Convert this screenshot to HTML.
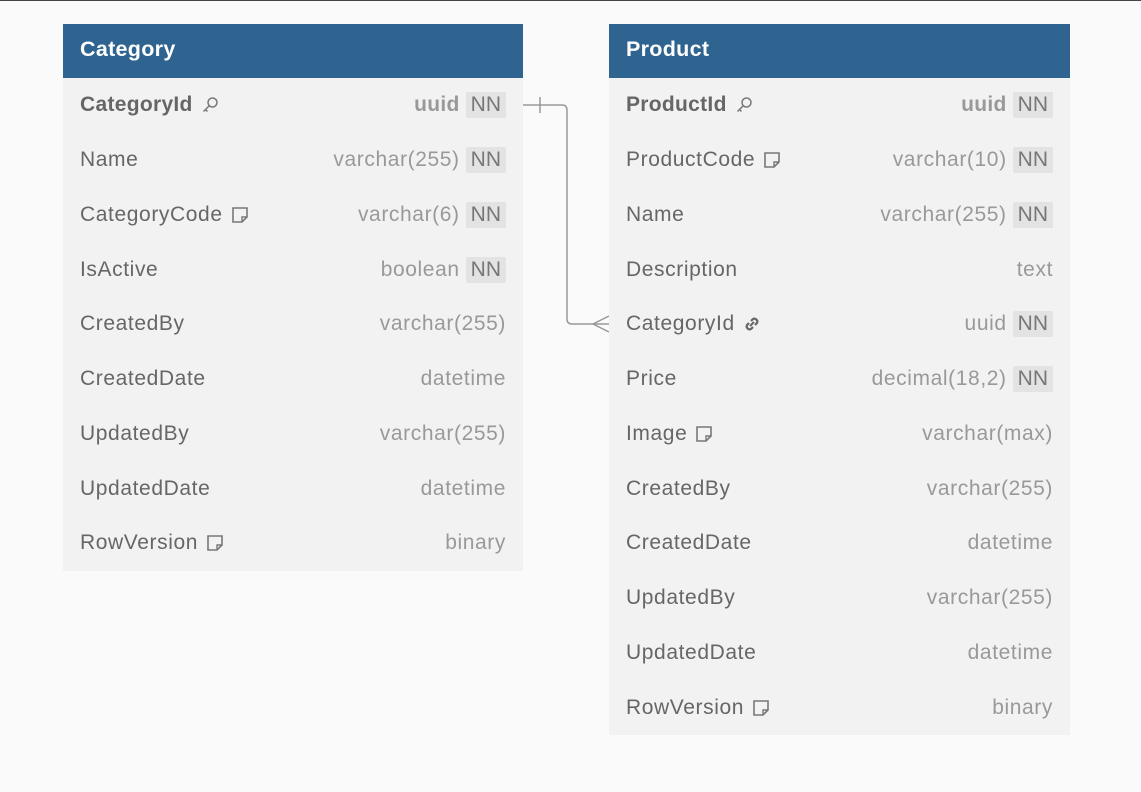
<!DOCTYPE html>
<html><head><style>
body{margin:0;width:1141px;height:791px;background:#fafafa;font-family:"Liberation Sans",sans-serif;position:relative;overflow:hidden;border-top:1px solid #444;box-sizing:border-box}
.t{position:absolute;background:#f2f2f2}
.h{height:54px;background:#2f6491;color:#fff;font-weight:bold;font-size:21.5px;line-height:50px;padding-left:17px;letter-spacing:0.3px}
.r{height:54.75px;display:flex;align-items:center;padding:0 17px;font-size:21px;letter-spacing:0.6px;color:#666;position:relative}
.r .n{flex:1;display:flex;align-items:center;gap:7px}
.r .ty{color:#999}
.nn{background:#e3e3e3;color:#777;padding:0 5px;margin-left:6px;line-height:26px;border-radius:2px;font-weight:normal;letter-spacing:0}
.b{font-weight:bold;letter-spacing:0.3px}
svg.i{width:20px;height:20px;flex-shrink:0}
</style></head><body>
<svg width="1141" height="791" style="position:absolute;left:0;top:0">
<path d="M523 104 H562 Q567 104 567 109 V318 Q567 323 572 323 H609" fill="none" stroke="#999" stroke-width="1.5"/>
<path d="M540 96 V112" stroke="#999" stroke-width="1.5"/>
<path d="M609 315 L593 323 L609 331" fill="none" stroke="#999" stroke-width="1.5"/>
</svg>
<div class="t" style="left:63px;top:23px;width:460px">
<div class="h">Category</div>
<div class="r b"><span class="n">CategoryId <svg class="i" viewBox="0 0 20 20"><circle cx="12.5" cy="7.5" r="4.5" fill="none" stroke="#777" stroke-width="1.5"/><path d="M9.5 10.5 L3.5 16.5 M5.5 14.5 L7.5 16.5" stroke="#777" stroke-width="1.5" fill="none"/></svg></span><span class="ty">uuid</span><span class="nn">NN</span></div>
<div class="r"><span class="n">Name</span><span class="ty">varchar(255)</span><span class="nn">NN</span></div>
<div class="r"><span class="n">CategoryCode <svg class="i" viewBox="0 0 20 20"><path d="M3 3H17V12L12 17H3Z" fill="none" stroke="#777" stroke-width="1.6"/><path d="M12 17V12H17" fill="none" stroke="#777" stroke-width="1.4"/></svg></span><span class="ty">varchar(6)</span><span class="nn">NN</span></div>
<div class="r"><span class="n">IsActive</span><span class="ty">boolean</span><span class="nn">NN</span></div>
<div class="r"><span class="n">CreatedBy</span><span class="ty">varchar(255)</span></div>
<div class="r"><span class="n">CreatedDate</span><span class="ty">datetime</span></div>
<div class="r"><span class="n">UpdatedBy</span><span class="ty">varchar(255)</span></div>
<div class="r"><span class="n">UpdatedDate</span><span class="ty">datetime</span></div>
<div class="r"><span class="n">RowVersion <svg class="i" viewBox="0 0 20 20"><path d="M3 3H17V12L12 17H3Z" fill="none" stroke="#777" stroke-width="1.6"/><path d="M12 17V12H17" fill="none" stroke="#777" stroke-width="1.4"/></svg></span><span class="ty">binary</span></div>
</div>
<div class="t" style="left:609px;top:23px;width:461px">
<div class="h">Product</div>
<div class="r b"><span class="n">ProductId <svg class="i" viewBox="0 0 20 20"><circle cx="12.5" cy="7.5" r="4.5" fill="none" stroke="#777" stroke-width="1.5"/><path d="M9.5 10.5 L3.5 16.5 M5.5 14.5 L7.5 16.5" stroke="#777" stroke-width="1.5" fill="none"/></svg></span><span class="ty">uuid</span><span class="nn">NN</span></div>
<div class="r"><span class="n">ProductCode <svg class="i" viewBox="0 0 20 20"><path d="M3 3H17V12L12 17H3Z" fill="none" stroke="#777" stroke-width="1.6"/><path d="M12 17V12H17" fill="none" stroke="#777" stroke-width="1.4"/></svg></span><span class="ty">varchar(10)</span><span class="nn">NN</span></div>
<div class="r"><span class="n">Name</span><span class="ty">varchar(255)</span><span class="nn">NN</span></div>
<div class="r"><span class="n">Description</span><span class="ty">text</span></div>
<div class="r"><span class="n">CategoryId <svg class="i" viewBox="0 0 20 20"><path d="M8 12 L12 8" stroke="#666" stroke-width="2"/><path d="M9 7 L11 5 A3 3 0 0 1 15 9 L13 11 M11 13 L9 15 A3 3 0 0 1 5 11 L7 9" fill="none" stroke="#666" stroke-width="2.2"/></svg></span><span class="ty">uuid</span><span class="nn">NN</span></div>
<div class="r"><span class="n">Price</span><span class="ty">decimal(18,2)</span><span class="nn">NN</span></div>
<div class="r"><span class="n">Image <svg class="i" viewBox="0 0 20 20"><path d="M3 3H17V12L12 17H3Z" fill="none" stroke="#777" stroke-width="1.6"/><path d="M12 17V12H17" fill="none" stroke="#777" stroke-width="1.4"/></svg></span><span class="ty">varchar(max)</span></div>
<div class="r"><span class="n">CreatedBy</span><span class="ty">varchar(255)</span></div>
<div class="r"><span class="n">CreatedDate</span><span class="ty">datetime</span></div>
<div class="r"><span class="n">UpdatedBy</span><span class="ty">varchar(255)</span></div>
<div class="r"><span class="n">UpdatedDate</span><span class="ty">datetime</span></div>
<div class="r"><span class="n">RowVersion <svg class="i" viewBox="0 0 20 20"><path d="M3 3H17V12L12 17H3Z" fill="none" stroke="#777" stroke-width="1.6"/><path d="M12 17V12H17" fill="none" stroke="#777" stroke-width="1.4"/></svg></span><span class="ty">binary</span></div>
</div>
</body></html>
